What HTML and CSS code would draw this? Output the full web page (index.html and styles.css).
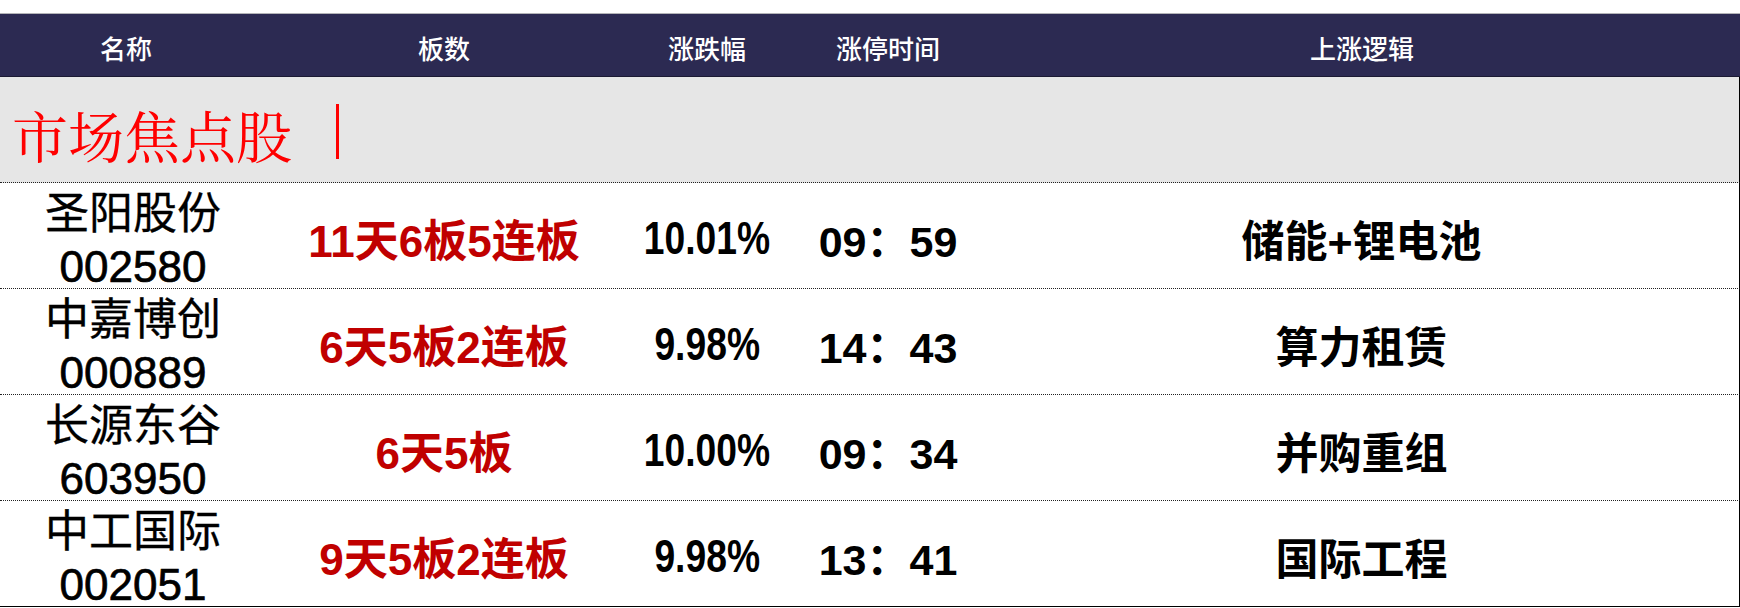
FILE: index.html
```html
<!DOCTYPE html>
<html lang="zh-CN">
<head>
<meta charset="utf-8">
<title>市场焦点股</title>
<link rel="stylesheet" href="styles.css">
</head>
<body>
<div class="sheet">
  <div class="head grid">
    <div class="hcell hname">名称</div>
    <div class="hcell">板数</div>
    <div class="hcell">涨跌幅</div>
    <div class="hcell">涨停时间</div>
    <div class="hcell">上涨逻辑</div>
  </div>
  <div class="section">
    <span class="section-title">市场焦点股</span><span class="bar"></span>
  </div>

  <div class="row grid">
    <div class="cell name"><span>圣阳股份</span><span class="code">002580</span></div>
    <div class="cell board">11天6板5连板</div>
    <div class="cell"><span class="pct">10.01%</span></div>
    <div class="cell time">09：59</div>
    <div class="cell logic">储能+锂电池</div>
  </div>
  <div class="row grid">
    <div class="cell name"><span>中嘉博创</span><span class="code">000889</span></div>
    <div class="cell board">6天5板2连板</div>
    <div class="cell"><span class="pct">9.98%</span></div>
    <div class="cell time">14：43</div>
    <div class="cell logic">算力租赁</div>
  </div>
  <div class="row grid">
    <div class="cell name"><span>长源东谷</span><span class="code">603950</span></div>
    <div class="cell board">6天5板</div>
    <div class="cell"><span class="pct">10.00%</span></div>
    <div class="cell time">09：34</div>
    <div class="cell logic">并购重组</div>
  </div>
  <div class="row grid last">
    <div class="cell name"><span>中工国际</span><span class="code">002051</span></div>
    <div class="cell board">9天5板2连板</div>
    <div class="cell"><span class="pct">9.98%</span></div>
    <div class="cell time">13：41</div>
    <div class="cell logic">国际工程</div>
  </div>
</div>
</body>
</html>
```

FILE: styles.css
```css
* {
  box-sizing: border-box;
}

html, body {
  margin: 0;
  padding: 0;
  background: #ffffff;
}

body {
  font-family: "Liberation Sans", "Noto Sans CJK SC", sans-serif;
  color: #000;
}

.sheet {
  width: 1740px;
  padding-top: 13px;
}

.grid {
  display: grid;
  grid-template-columns: 266px 356px 170px 192px 1fr;
}

.head {
  height: 64px;
  background: #2c2a52;
  border-top: 1px solid #b4b4b8;
  border-bottom: 1px solid #1b1a33;
  color: #ffffff;
}

.hcell {
  display: flex;
  align-items: center;
  justify-content: center;
  padding-top: 4px;
  font-family: "Noto Sans CJK SC", sans-serif;
  font-size: 26px;
  font-weight: 500;
}

.hname {
  padding-right: 14px;
}

.section {
  height: 106px;
  background: #e6e6e6;
  border-bottom: 1px dotted #222;
  border-right: 1px solid #000;
  display: flex;
  align-items: center;
  padding-left: 12px;
  padding-top: 8px;
}

.section-title {
  font-family: "Noto Serif CJK SC", "Source Han Serif SC", "AR PL UMing CN", "Noto Sans CJK SC", serif;
  font-size: 56px;
  line-height: 60px;
  color: #ff0000;
  font-weight: 400;
}

.bar {
  display: inline-block;
  width: 3px;
  height: 55px;
  background: #ff0000;
  margin-left: 44px;
  margin-top: -4px;
}

.row {
  height: 106px;
  border-bottom: 1px dotted #222;
  border-right: 1px solid #000;
}

.row.last {
  border-bottom: 1px solid #000;
}

.cell {
  display: flex;
  align-items: center;
  justify-content: center;
  font-size: 44px;
  white-space: nowrap;
}

.name {
  flex-direction: column;
  font-size: 44px;
  line-height: 53px;
  padding-top: 4px;
  font-weight: 400;
  -webkit-text-stroke: 0.3px #000;
}

.code {
  -webkit-text-stroke: 0.7px #000;
}

.board {
  color: #c00000;
  font-weight: 700;
}

.pct {
  display: inline-block;
  font-size: 46px;
  font-weight: 700;
  transform: scaleX(0.81);
}

.time {
  font-weight: 700;
  font-size: 43px;
}

.logic {
  font-weight: 700;
  font-size: 43px;
}
```
